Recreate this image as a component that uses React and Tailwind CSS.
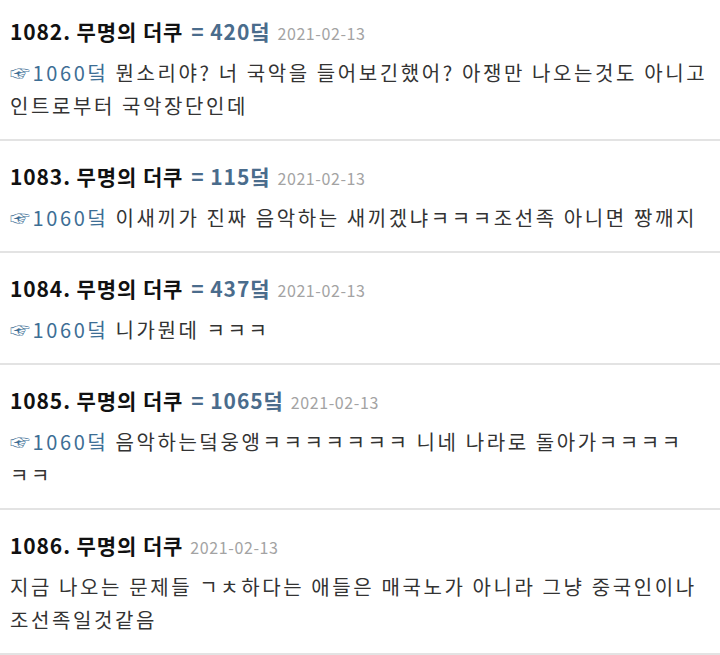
import React from 'react';

// lines are kept as the original post wraps them
const COMMENTS = [
  { no: 1082, score: '420', date: '2021-02-13', ref: '1060', lines: ['뭔소리야? 너 국악을 들어보긴했어? 아쟁만 나오는것도 아니고', '인트로부터 국악장단인데'] },
  { no: 1083, score: '115', date: '2021-02-13', ref: '1060', lines: ['이새끼가 진짜 음악하는 새끼겠냐ㅋㅋㅋ조선족 아니면 짱깨지'] },
  { no: 1084, score: '437', date: '2021-02-13', ref: '1060', lines: ['니가뭔데 ㅋㅋㅋ'] },
  { no: 1085, score: '1065', date: '2021-02-13', ref: '1060', lines: ['음악하는덬웅앵ㅋㅋㅋㅋㅋㅋㅋ 니네 나라로 돌아가ㅋㅋㅋㅋ', 'ㅋㅋ'] },
  { no: 1086, score: null, date: '2021-02-13', ref: null, lines: ['지금 나오는 문제들 ㄱㅊ하다는 애들은 매국노가 아니라 그냥 중국인이나', '조선족일것같음'] },
];

function Comment({ c, first }) {
  return (
    <div className={`border-b-2 border-[#e3e3e3] pl-[10px] pr-1 pb-[17px] ${first ? 'pt-[16px]' : 'pt-[20px]'}`}>
      <div className="flex items-baseline leading-[30px] whitespace-nowrap">
        <span className="text-[21px] font-bold text-[#111] tracking-[0.9px]">{c.no}. 무명의 더쿠</span>
        {c.score && (
          <span className="ml-[8px] text-[21px] font-bold text-[#4a6c8c] tracking-[0.9px]">= {c.score}덬</span>
        )}
        <span className="ml-[7px] text-[16px] text-[#a3a3a3] tracking-[0.6px]">{c.date}</span>
      </div>
      <div className="mt-[8px] text-[20px] leading-[33px] text-[#333] tracking-[2.6px]">
        {c.lines.map((line, i) => (
          <p key={i} className="whitespace-nowrap">
            {i === 0 && c.ref && <span className="text-[#3d6e95]">☞{c.ref}덬 </span>}
            {line}
          </p>
        ))}
      </div>
    </div>
  );
}

export default function App() {
  return (
    <div className="w-[720px] h-[655px] overflow-hidden bg-white" style={{ fontFamily: '"Noto Sans CJK KR", "Noto Sans", sans-serif' }}>
      {COMMENTS.map((c, i) => (
        <Comment key={c.no} c={c} first={i === 0} />
      ))}
    </div>
  );
}
